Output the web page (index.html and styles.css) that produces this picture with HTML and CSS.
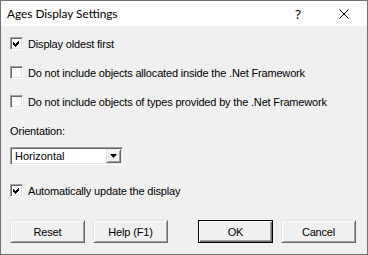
FILE: index.html
```html
<!DOCTYPE html>
<html>
<head>
<meta charset="utf-8">
<link rel="stylesheet" href="styles.css">
</head>
<body>
<div class="window">
  <div class="titlebar">
    <span class="title">Ages Display Settings</span>
    <span class="cap help">?</span>
    <span class="cap close"><svg width="10" height="10" viewBox="0 0 10 10"><path d="M0.5 0.5 L9.5 9.5 M9.5 0.5 L0.5 9.5" stroke="#000" stroke-width="1" fill="none"/></svg></span>
  </div>
  <div class="content">
    <div class="row r1"><span class="box"><svg width="9" height="9" viewBox="0 0 9 9" class="tick"><polygon points="1,3 3,5 7,1 7,4 3,8 1,6" fill="#000"/></svg></span><span class="lbl">Display oldest first</span></div>
    <div class="row r2"><span class="box"></span><span class="lbl">Do not include objects allocated inside the .Net Framework</span></div>
    <div class="row r3"><span class="box"></span><span class="lbl">Do not include objects of types provided by the .Net Framework</span></div>
    <div class="caption">Orientation:</div>
    <div class="combo">
      <span class="combo-text">Horizontal</span>
      <span class="combo-btn"><svg width="7" height="4" viewBox="0 0 7 4"><polygon points="0,0 7,0 3.5,4" fill="#000"/></svg></span>
    </div>
    <div class="row r4"><span class="box"><svg width="9" height="9" viewBox="0 0 9 9" class="tick"><polygon points="1,3 3,5 7,1 7,4 3,8 1,6" fill="#000"/></svg></span><span class="lbl">Automatically update the display</span></div>
    <div class="buttons">
      <div class="group">
        <span class="btn">Reset</span>
        <span class="btn">Help (F1)</span>
      </div>
      <div class="group">
        <span class="btn default">OK</span>
        <span class="btn">Cancel</span>
      </div>
    </div>
  </div>
</div>
</body>
</html>
```
FILE: styles.css
```css
html, body {
  margin: 0;
  padding: 0;
  background: #f0f0f0;
}
.window {
  width: 368px;
  height: 255px;
  box-sizing: border-box;
  border: 1px solid #707070;
  background: #f0f0f0;
  font-family: "Liberation Sans", Arial, sans-serif;
  font-size: 11px;
  letter-spacing: -0.17px;
  color: #000;
  overflow: hidden;
}
.titlebar {
  height: 25px;
  background: #fff;
  display: flex;
  align-items: center;
  letter-spacing: 0;
}
.title {
  flex: 1;
  padding-left: 6px;
  font-family: "Lato", "Noto Sans", sans-serif;
  font-size: 11.8px;
}
.cap {
  width: 46px;
  height: 25px;
  display: flex;
  align-items: center;
  justify-content: center;
}
.help {
  font-family: "Noto Sans", sans-serif;
  font-size: 13px;
}
.close svg {
  display: block;
}
.content {
  padding: 0 11px 0 9px;
}
.row {
  display: flex;
  align-items: center;
  height: 13px;
}
.r1 { margin-top: 11px; }
.r2 { margin-top: 16px; }
.r3 { margin-top: 16px; }
.r4 { margin-top: 19px; }
.box {
  width: 13px;
  height: 13px;
  box-sizing: border-box;
  background: #fff;
  border: 1px solid;
  border-color: #a0a0a0 #fff #fff #a0a0a0;
  box-shadow: inset 1px 1px #696969, inset -1px -1px #e3e3e3;
  display: flex;
  align-items: center;
  justify-content: center;
  flex: none;
}
.tick {
  display: block;
  shape-rendering: crispEdges;
}
.lbl {
  margin-left: 5px;
  white-space: nowrap;
}
.caption {
  margin-top: 17px;
  height: 13px;
  line-height: 13px;
}
.combo {
  margin-top: 9px;
  width: 113px;
  height: 18px;
  box-sizing: border-box;
  background: #fff;
  border: 1px solid;
  border-color: #a0a0a0 #fff #fff #a0a0a0;
  box-shadow: inset 1px 1px #696969, inset -1px -1px #e3e3e3;
  display: flex;
  align-items: center;
  padding: 1px;
}
.combo-text {
  flex: 1;
  padding-left: 3px;
  letter-spacing: 0;
}
.combo-btn {
  width: 15px;
  height: 14px;
  box-sizing: border-box;
  background: #f0f0f0;
  border: 1px solid;
  border-color: #e3e3e3 #696969 #696969 #e3e3e3;
  box-shadow: inset 1px 1px #fff, inset -1px -1px #a0a0a0;
  display: flex;
  align-items: center;
  justify-content: center;
}
.combo-btn svg {
  display: block;
}
.buttons {
  margin-top: 23px;
  display: flex;
  justify-content: space-between;
}
.group {
  display: flex;
  gap: 8px;
}
.btn {
  width: 75px;
  height: 23px;
  box-sizing: border-box;
  background: #f0f0f0;
  border: 1px solid;
  border-color: #e3e3e3 #696969 #696969 #e3e3e3;
  box-shadow: inset 1px 1px #fff, inset -1px -1px #a0a0a0;
  display: flex;
  align-items: center;
  justify-content: center;
}
.btn.default {
  border: 1px solid #000;
  box-shadow: inset 1px 1px #fff, inset -1px -1px #696969, inset -2px -2px #a0a0a0;
}
```
